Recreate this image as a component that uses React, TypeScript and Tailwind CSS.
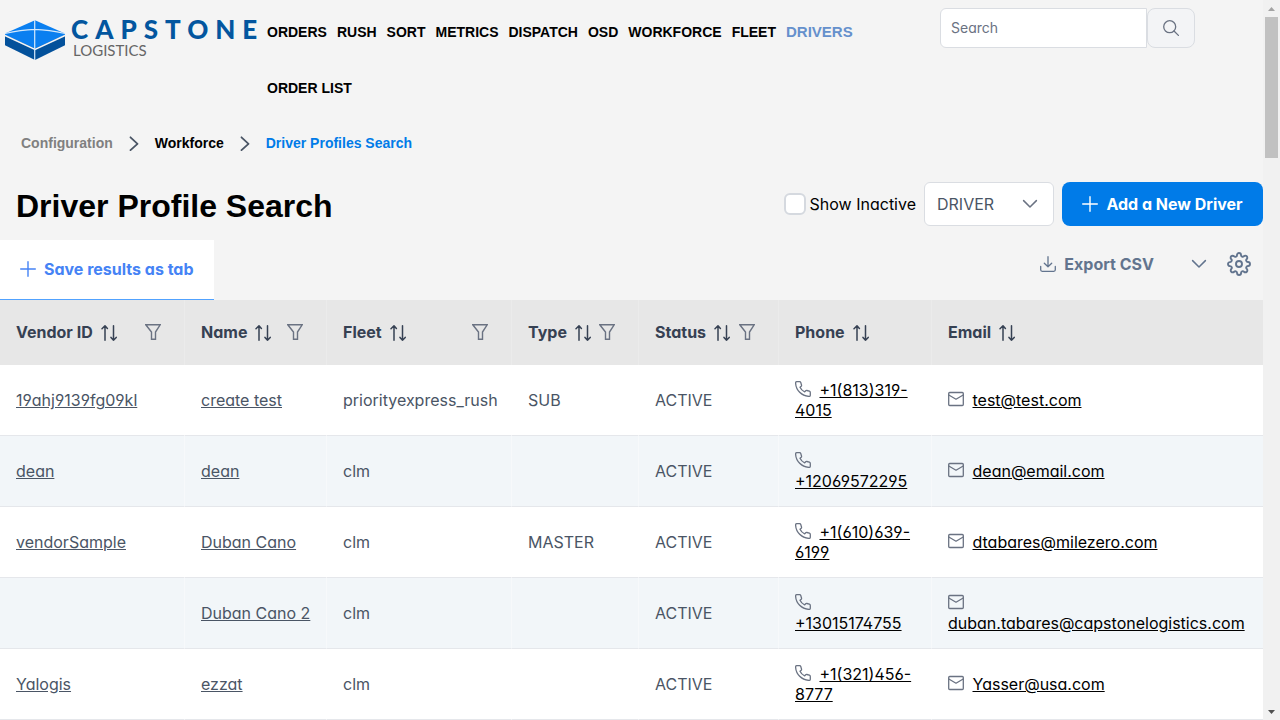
import type { ReactNode } from "react";
import { FiSettings } from "react-icons/fi";

type Driver = {
  vendor: string;
  name: string;
  fleet: string;
  type: string;
  phone: string;
  email: string;
};

const drivers: Driver[] = [
  { vendor: "19ahj9139fg09kl", name: "create test", fleet: "priorityexpress_rush", type: "SUB", phone: "+1(813)319-4015", email: "test@test.com" },
  { vendor: "dean", name: "dean", fleet: "clm", type: "", phone: "+12069572295", email: "dean@email.com" },
  { vendor: "vendorSample", name: "Duban Cano", fleet: "clm", type: "MASTER", phone: "+1(610)639-6199", email: "dtabares@milezero.com" },
  { vendor: "", name: "Duban Cano 2", fleet: "clm", type: "", phone: "+13015174755", email: "duban.tabares@capstonelogistics.com" },
  { vendor: "Yalogis", name: "ezzat", fleet: "clm", type: "", phone: "+1(321)456-8777", email: "Yasser@usa.com" },
];

const columns = [
  { label: "Vendor ID", filter: true, width: "w-[185px]" },
  { label: "Name", filter: true, width: "w-[142px]" },
  { label: "Fleet", filter: true, width: "w-[185px]" },
  { label: "Type", filter: true, width: "w-[127px]" },
  { label: "Status", filter: true, width: "w-[140px]" },
  { label: "Phone", filter: false, width: "w-[153px]" },
  { label: "Email", filter: false, width: "" },
];

const navItems = ["ORDERS", "RUSH", "SORT", "METRICS", "DISPATCH", "OSD", "WORKFORCE", "FLEET"];

function Icon({ className, children }: { className: string; children: ReactNode }) {
  return (
    <svg viewBox="0 0 16 16" fill="none" stroke="currentColor" strokeWidth="1.3" strokeLinecap="round" strokeLinejoin="round" className={className} aria-hidden="true">
      {children}
    </svg>
  );
}

const ChevronDown = ({ className }: { className: string }) => (
  <Icon className={className}><path d="M1.6 4.6 8 11l6.4-6.4" strokeWidth="1.5" /></Icon>
);
const ChevronRight = () => (
  <Icon className="size-4 text-gray-600"><path d="M4.500 2.300 11.500 8.800l-7 6.400" strokeWidth="1.8" /></Icon>
);
const Plus = () => (
  <Icon className="size-4"><path d="M8 .7v14.6M.7 8h14.6" strokeWidth="1.4" /></Icon>
);
const Sort = () => (
  <Icon className="mt-0.5 size-4 shrink-0"><path d="M4 15.2V.9M1 3.8 4 .8l2.400 2.600M12.500.8v14.400M10 12.400l2.500 2.800 2.700-2.800" strokeWidth="1.5" /></Icon>
);
const Filter = () => (
  <Icon className="size-4"><path d="M.8.800h14.400L10.500 8v7.200h-4V8z" strokeLinejoin="miter" strokeWidth="1.4" /></Icon>
);
const Phone = () => (
  <Icon className="mr-1 inline-block size-4 align-[-1px] text-gray-500">
    <path d="M4.600.7H1.800C1.100.7.600 1.300.600 2c.3 7.300 6.100 13.100 13.400 13.400.7 0 1.300-.5 1.300-1.200v-2.800c0-.6-.4-1-.9-1.200l-2.500-.7c-.4-.1-.9 0-1.200.3l-1 1.100C7.600 9.900 6 8.300 5 6.200l1.200-1c.3-.3.400-.8.300-1.200l-.7-2.400C5.600 1.100 5.200.700 4.600.700z" />
  </Icon>
);
const Mail = () => (
  <Icon className="mr-1 inline-block size-4 align-[-1px] text-gray-500">
    <rect x=".7" y="1.500" width="14.600" height="13" rx="1" /><path d="m.8 4 7.200 4.200L15.200 4" />
  </Icon>
);
const Download = () => (
  <Icon className="size-4"><path d="M8 .7v10M4.300 7.300 8 10.800l3.700-3.500M.7 10.500v3.300c0 .9.6 1.500 1.500 1.500h11.600c.9 0 1.500-.6 1.500-1.500v-3.300" /></Icon>
);

function Logo() {
  return (
    <a href="#home" aria-label="Capstone Logistics" className="block shrink-0">
      <svg viewBox="0 0 266 64" className="h-16 w-[266px]">
        <path d="M5 35.500 35 21l30 14.500v9.800L35 60 5 45.300z" fill="#03519b" />
        <path d="M5 33.500 35 20.200 65 33.500v1.200L35 48.500 5 34.700z" fill="#0a7ff0" />
        <path d="M5 35.500 35 49.500l30-14" fill="none" stroke="#f4f4f4" strokeWidth="1.500" />
        <path d="M34.700 20v40M5 33.500Q21 29.800 34.700 29.300 49 29.800 65 33.500" fill="none" stroke="#d5e9fb" strokeWidth="1.200" />
        <text x="71" y="39" fontSize="26" fill="#03569f" className="font-['Lato',sans-serif] font-black tracking-[7px]">CAPSTONE</text>
        <text x="73" y="56" fontSize="15" fill="#666" className="font-['Lato',sans-serif]">LOGISTICS</text>
      </svg>
    </a>
  );
}

function Cell({ children }: { children?: ReactNode }) {
  return <td className="border-b border-r border-b-gray-200 border-r-white/40 py-[15px] pl-4 pr-[15px] last:border-r-0">{children}</td>;
}

export default function App() {
  return (
    <div className="flex h-screen overflow-hidden bg-[#f4f4f4] font-['Inter',sans-serif] text-base leading-5 text-gray-600 [font-feature-settings:'cv02','cv03','cv04','cv11']">
      <main className="min-w-0 flex-1 overflow-hidden">
        <header className="flex h-[116px] items-start">
          <Logo />
          <nav className="flex flex-1 flex-wrap gap-x-[10px] pl-px pt-1 font-['Liberation_Sans',sans-serif] text-sm font-bold leading-[56px] text-black">
            {navItems.map((item) => <a key={item} href={"#" + item.toLowerCase()} className="leading-[56px]">{item}</a>)}
            <a href="#drivers" className="text-[15px] font-black leading-[56px] text-[#6590cc]">DRIVERS</a>
            <a href="#order-list" className="basis-full">ORDER LIST</a>
          </nav>
          <form className="mr-[68px] mt-2 flex h-10 w-[255px] shrink-0" onSubmit={(e) => e.preventDefault()}>
            <input type="text" aria-label="Search" placeholder="Search" className="min-w-0 flex-1 rounded-l-md border border-[#dadde2] bg-white px-[10px] text-sm placeholder:text-gray-500" />
            <button type="submit" aria-label="Submit search" className="flex w-12 items-center justify-center rounded-lg border border-[#dadde2] bg-gray-100 text-gray-500">
              <Icon className="size-4"><circle cx="6.700" cy="6.700" r="6" /><path d="m11 11 4.400 4.400" /></Icon>
            </button>
          </form>
        </header>

        <nav aria-label="Breadcrumb" className="flex h-[54px] items-center gap-[13px] pl-[21px] font-['Liberation_Sans',sans-serif] text-sm font-bold">
          <a href="#configuration" className="text-[#808080]">Configuration</a>
          <ChevronRight />
          <a href="#workforce" className="text-black">Workforce</a>
          <ChevronRight />
          <a href="#driver-profiles" className="text-[#007be8]">Driver Profiles Search</a>
        </nav>

        <div className="flex h-[70px] items-start pl-4 pt-3">
          <h1 className="flex-1 font-['Liberation_Sans',sans-serif] text-[32px] font-bold leading-[48px] text-black">Driver Profile Search</h1>
          <label className="flex h-11 items-center gap-1 text-black">
            <input type="checkbox" className="size-[22px] appearance-none rounded-md border-2 border-[#d5d9df] bg-white checked:bg-blue-600" />
            Show Inactive
          </label>
          <div className="relative ml-2 mr-2">
            <select aria-label="Profile type" className="block h-11 w-[130px] appearance-none rounded-md border border-[#dadde2] bg-white pl-3 text-gray-600">
              <option>DRIVER</option>
              <option>VENDOR</option>
            </select>
            <ChevronDown className="pointer-events-none absolute right-4 top-[14px] size-4 text-gray-500" />
          </div>
          <button type="button" className="flex h-11 w-[201px] items-center justify-center gap-2 rounded-lg bg-[#007be8] font-bold text-white">
            <Plus />Add a New Driver
          </button>
        </div>

        <div className="flex h-[60px] items-start justify-between">
          <button type="button" className="flex h-[60px] items-center gap-2 border-b border-blue-400 bg-white px-5 pb-px font-bold text-[#4583f5]">
            <Plus />Save results as tab
          </button>
          <div className="flex h-12 items-center pr-3 text-slate-500">
            <button type="button" className="flex items-center gap-2 font-bold"><Download />Export CSV</button>
            <button type="button" aria-label="Export options" className="ml-[37px]"><ChevronDown className="size-4" /></button>
            <button type="button" aria-label="Settings" className="ml-5"><FiSettings className="size-6" strokeWidth={1.900} /></button>
          </div>
        </div>

        <table className="w-full table-fixed border-separate border-spacing-0 text-left">
          <thead>
            <tr className="h-[65px] bg-[#e7e7e7] text-gray-700">
              {columns.map((c) => (
                <th key={c.label} scope="col" className={"border-r border-white/20 pb-0.5 pl-4 pr-[15px] font-bold last:border-r-0 " + c.width}>
                  <div className="flex items-center">
                    <button type="button" className="flex items-center gap-2 whitespace-nowrap">{c.label}<Sort /></button>
                    {c.filter && <button type="button" aria-label={"Filter " + c.label} className="ml-auto mr-2 text-gray-500"><Filter /></button>}
                  </div>
                </th>
              ))}
            </tr>
          </thead>
          <tbody>
            {drivers.map((d) => (
              <tr key={d.name} className="h-[71px] bg-white even:bg-[#f2f6f9]">
                <Cell>{d.vendor && <a href="#vendor" className="underline">{d.vendor}</a>}</Cell>
                <Cell><a href="#driver" className="underline">{d.name}</a></Cell>
                <Cell>{d.fleet}</Cell>
                <Cell>{d.type}</Cell>
                <Cell>ACTIVE</Cell>
                <Cell><Phone /> <a href={"tel:" + d.phone} className="text-black underline">{d.phone}</a></Cell>
                <Cell><Mail /> <a href={"mailto:" + d.email} className="text-black underline">{d.email}</a></Cell>
              </tr>
            ))}
          </tbody>
        </table>
      </main>

      <div aria-hidden="true" className="flex w-[17px] shrink-0 flex-col items-center bg-[#f1f1f1]">
        <span className="flex h-[17px] items-center"><svg viewBox="0 0 7 4" className="h-1 w-[7px]"><path d="M0 4h7L3.500 0z" fill="#a3a3a3" /></svg></span>
        <span className="h-[141px] w-[13px] bg-[#c1c1c1]" />
        <span className="mt-auto flex h-[17px] items-center"><svg viewBox="0 0 7 4" className="h-1 w-[7px]"><path d="M0 0h7L3.500 4z" fill="#505050" /></svg></span>
      </div>
    </div>
  );
}
